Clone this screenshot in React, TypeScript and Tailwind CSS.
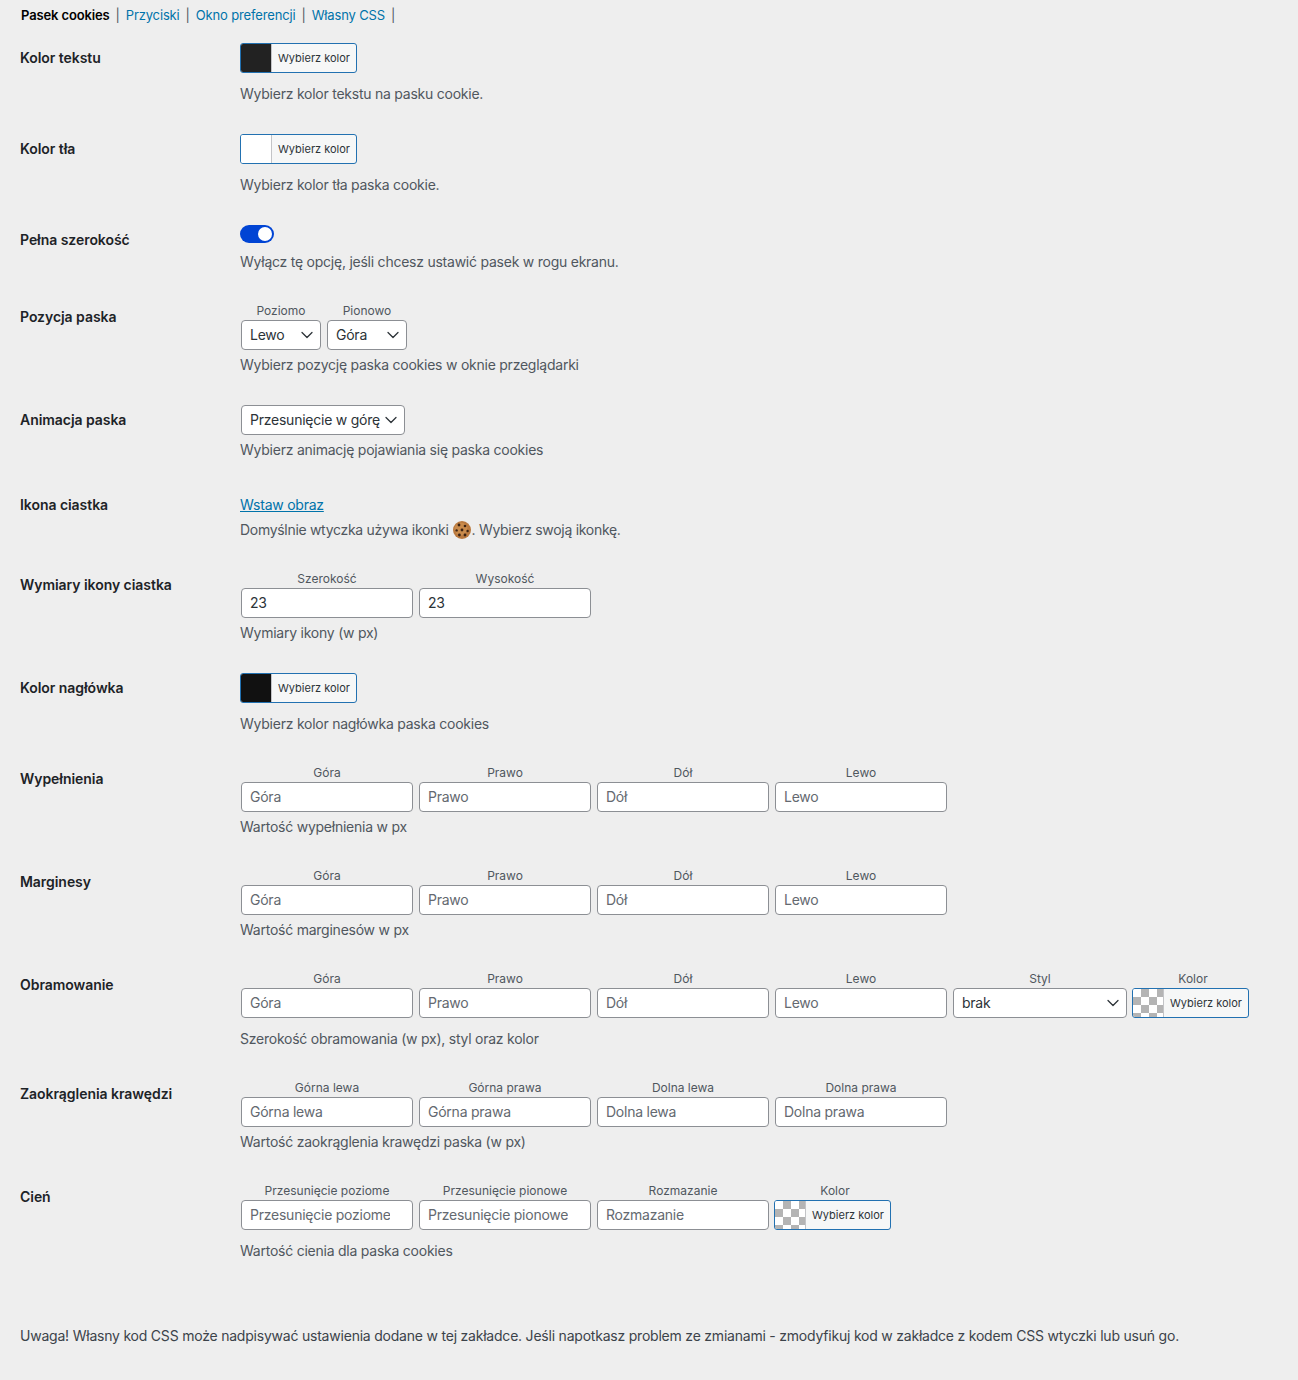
import { ChevronDown } from "lucide-react";

const checker =
  "bg-[conic-gradient(#b4b4b4_25%,#fff_0_50%,#b4b4b4_0_75%,#fff_0)] bg-[length:16px_16px]";

function ColorButton({ swatch }: { swatch: string }) {
  return (
    <button className="flex h-[30px] w-[117px] shrink-0 items-stretch overflow-hidden rounded-[3px] border border-[#2271b1] bg-[#f6f7f7] p-0">
      <span className={`w-[31px] border-r border-[#c3c4c7] ${swatch}`} />
      <span className="pl-[6px] text-[11px] leading-[28px] text-[#2c3338]">Wybierz kolor</span>
    </button>
  );
}

function Desc({ children, className = "" }: { children: React.ReactNode; className?: string }) {
  return <p className={`h-[21px] text-sm leading-[21px] tracking-[-0.24px] text-[#50575e] ${className}`}>{children}</p>;
}

function Labeled({ label, className = "", labelClass = "", children }: { label: string; className?: string; labelClass?: string; children: React.ReactNode }) {
  return (
    <div className={className}>
      <div className={`h-[18px] text-center text-xs leading-[17px] text-[#50575e] ${labelClass}`}>{label}</div>
      {children}
    </div>
  );
}

function TextInput({ placeholder, value }: { placeholder?: string; value?: string }) {
  return (
    <input
      defaultValue={value}
      placeholder={placeholder}
      className="block h-[30px] w-[172px] rounded border border-[#8c8f94] bg-white pb-[2px] pl-2 pr-[22px] text-sm tracking-[-0.24px] text-[#2c3338] outline-none placeholder:text-[#646970]"
    />
  );
}

function Select({ value, width }: { value: string; width: string }) {
  return (
    <div className={`relative h-[30px] ${width}`}>
      <select
        defaultValue={value}
        className="h-full w-full appearance-none rounded border border-[#8c8f94] bg-white pl-2 pr-[20px] text-sm tracking-[-0.24px] text-[#2c3338] outline-none"
      >
        <option>{value}</option>
      </select>
      <ChevronDown size={20} strokeWidth={1.5} className="pointer-events-none absolute right-[4px] top-[5px] text-[#2c3338]" />
    </div>
  );
}

function Row({ label, children, height }: { label: string; children: React.ReactNode; height: string }) {
  return (
    <div className={`flex ${height}`}>
      <div className="w-[240px] shrink-0 pl-5 pt-5 text-sm font-semibold leading-5 tracking-[-0.05px] text-[#1d2327]">{label}</div>
      <div className="pt-[15px]">{children}</div>
    </div>
  );
}

function InputRow({ label, desc, fields }: { label: string; desc: string; fields: string[] }) {
  return (
    <Row label={label} height="h-[103px]">
      <div className="ml-px flex gap-[6px]">
        {fields.map((f) => (
          <Labeled key={f} label={f}>
            <TextInput placeholder={f} />
          </Labeled>
        ))}
      </div>
      <Desc className="mt-[4px]">{desc}</Desc>
    </Row>
  );
}

const sides = ["Góra", "Prawo", "Dół", "Lewo"];

function CookieIcon() {
  return (
    <svg width="18" height="18" viewBox="0 0 18 18" className="ml-[4px] mr-px inline-block align-[-4px]">
      <circle cx="9" cy="9" r="9" fill="#b9793f" />
      <circle cx="8" cy="8" r="6.5" fill="#c98b4c" />
      <circle cx="6" cy="4" r="1.4" fill="#3b2314" />
      <circle cx="12" cy="5" r="1.3" fill="#3b2314" />
      <circle cx="3.6" cy="9.4" r="1.2" fill="#3b2314" />
      <circle cx="9" cy="9" r="1.4" fill="#3b2314" />
      <circle cx="14.6" cy="10" r="1.2" fill="#3b2314" />
      <circle cx="6.4" cy="14" r="1.4" fill="#3b2314" />
      <circle cx="12" cy="14" r="1.4" fill="#3b2314" />
    </svg>
  );
}

export default function App() {
  return (
    <div className="min-h-[1380px] bg-[#eeeeee] font-['Inter',sans-serif]">
      <nav className="flex h-[28px] items-start pl-[21px] pt-[5px] text-[13px] leading-5 tracking-[-0.15px] text-[#50575e]">
        <a className="font-semibold tracking-[-0.13px] text-black">Pasek cookies</a>
        <span className="px-[6px]">|</span>
        <a className="text-[#0073aa]">Przyciski</a>
        <span className="px-[6px]">|</span>
        <a className="text-[#0073aa]">Okno preferencji</a>
        <span className="px-[6px]">|</span>
        <a className="text-[#0073aa]">Własny CSS</a>
        <span className="px-[6px]">|</span>
      </nav>

      <Row label="Kolor tekstu" height="h-[91px]">
        <ColorButton swatch="bg-[#222222]" />
        <Desc className="mt-[10px]">Wybierz kolor tekstu na pasku cookie.</Desc>
      </Row>

      <Row label="Kolor tła" height="h-[91px]">
        <ColorButton swatch="bg-white" />
        <Desc className="mt-[10px]">Wybierz kolor tła paska cookie.</Desc>
      </Row>

      <Row label="Pełna szerokość" height="h-[77px]">
        <div className="relative h-[18px] w-[34px] rounded-full bg-[#0044d4]">
          <span className="absolute right-[2px] top-[2px] h-[14px] w-[14px] rounded-full bg-white" />
        </div>
        <Desc className="mt-[8px]">Wyłącz tę opcję, jeśli chcesz ustawić pasek w rogu ekranu.</Desc>
      </Row>

      <Row label="Pozycja paska" height="h-[103px]">
        <div className="ml-px flex gap-[6px]">
          <Labeled label="Poziomo">
            <Select value="Lewo" width="w-[80px]" />
          </Labeled>
          <Labeled label="Pionowo">
            <Select value="Góra" width="w-[80px]" />
          </Labeled>
        </div>
        <Desc className="mt-[4px]">Wybierz pozycję paska cookies w oknie przeglądarki</Desc>
      </Row>

      <Row label="Animacja paska" height="h-[85px]">
        <div className="ml-px">
          <Select value="Przesunięcie w górę" width="w-[164px]" />
        </div>
        <Desc className="mt-[4px]">Wybierz animację pojawiania się paska cookies</Desc>
      </Row>

      <Row label="Ikona ciastka" height="h-[80px]">
        <a className="mt-[4px] block h-[21px] text-sm leading-[21px] tracking-[-0.24px] text-[#0073aa] underline">Wstaw obraz</a>
        <Desc className="mt-[4px] !tracking-[-0.3px]">
          Domyślnie wtyczka używa ikonki
          <CookieIcon />. Wybierz swoją ikonkę.
        </Desc>
      </Row>

      <Row label="Wymiary ikony ciastka" height="h-[103px]">
        <div className="ml-px flex gap-[6px]">
          <Labeled label="Szerokość">
            <TextInput value="23" />
          </Labeled>
          <Labeled label="Wysokość">
            <TextInput value="23" />
          </Labeled>
        </div>
        <Desc className="mt-[4px]">Wymiary ikony (w px)</Desc>
      </Row>

      <Row label="Kolor nagłówka" height="h-[91px]">
        <ColorButton swatch="bg-[#111111]" />
        <Desc className="mt-[10px]">Wybierz kolor nagłówka paska cookies</Desc>
      </Row>

      <InputRow label="Wypełnienia" desc="Wartość wypełnienia w px" fields={sides} />
      <InputRow label="Marginesy" desc="Wartość marginesów w px" fields={sides} />

      <Row label="Obramowanie" height="h-[109px]">
        <div className="ml-px flex gap-[6px]">
          {sides.map((f) => (
            <Labeled key={f} label={f}>
              <TextInput placeholder={f} />
            </Labeled>
          ))}
          <Labeled label="Styl">
            <Select value="brak" width="w-[174px]" />
          </Labeled>
          <Labeled label="Kolor" className="-ml-px" labelClass="pl-[5px]">
            <ColorButton swatch={checker} />
          </Labeled>
        </div>
        <Desc className="mt-[10px]">Szerokość obramowania (w px), styl oraz kolor</Desc>
      </Row>

      <InputRow
        label="Zaokrąglenia krawędzi"
        desc="Wartość zaokrąglenia krawędzi paska (w px)"
        fields={["Górna lewa", "Górna prawa", "Dolna lewa", "Dolna prawa"]}
      />

      <Row label="Cień" height="h-[109px]">
        <div className="ml-px flex gap-[6px]">
          {["Przesunięcie poziome", "Przesunięcie pionowe", "Rozmazanie"].map((f) => (
            <Labeled key={f} label={f}>
              <TextInput placeholder={f} />
            </Labeled>
          ))}
          <Labeled label="Kolor" className="-ml-px" labelClass="pl-[5px]">
            <ColorButton swatch={checker} />
          </Labeled>
        </div>
        <Desc className="mt-[10px]">Wartość cienia dla paska cookies</Desc>
      </Row>

      <p className="ml-5 mt-[49px] text-sm leading-[21px] tracking-[-0.215px] text-[#3c434a]">
        Uwaga! Własny kod CSS może nadpisywać ustawienia dodane w tej zakładce. Jeśli napotkasz problem ze zmianami - zmodyfikuj kod w zakładce z kodem CSS wtyczki lub usuń go.
      </p>
    </div>
  );
}
